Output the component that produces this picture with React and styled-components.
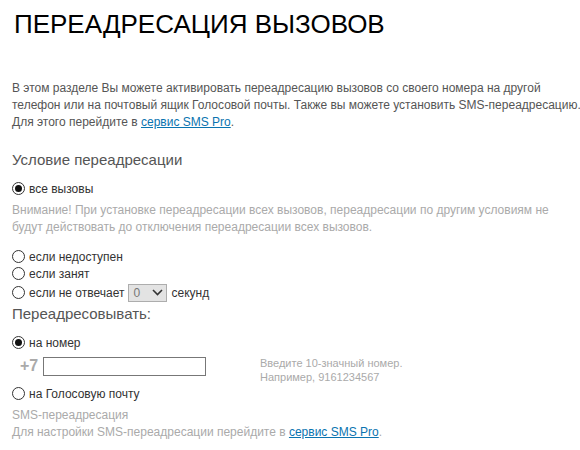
import React from "react";
import styled, { createGlobalStyle } from "styled-components";

const Global = createGlobalStyle`
  html, body { margin: 0; padding: 0; background: #fff; }
  body { font-family: "Liberation Sans", Arial, sans-serif; }
`;

const Page = styled.div`
  padding: 10px 2px 0 12px;
  width: 580px;
  box-sizing: border-box;
`;

const Title = styled.h1`
  margin: 0 0 0 2px;
  font-weight: normal;
  font-size: 26px;
  line-height: 29px;
  color: #000;
`;

const Intro = styled.p`
  margin: 41px 0 0 0;
  font-size: 12px;
  line-height: 17px;
  color: #555;
  white-space: nowrap;
`;

const Link = styled.a`
  color: #0a74b0;
  text-decoration: underline;
`;

const Heading = styled.h2`
  margin: ${(p) => p.$top}px 0 0 0;
  font-weight: normal;
  font-size: 15px;
  line-height: 20px;
  color: #555;
`;

const RadioRow = styled.label`
  display: flex;
  align-items: center;
  gap: 4px;
  height: ${(p) => p.$h || 17}px;
  margin-top: ${(p) => p.$top || 0}px;
  font-size: 12px;
  color: #333;
`;

const Circle = styled.span`
  width: 11px;
  height: 11px;
  border: 1px solid #333;
  border-radius: 50%;
  background: #fff;
  display: flex;
  align-items: center;
  justify-content: center;
  flex: none;
  &::after {
    content: "";
    display: ${(p) => (p.$on ? "block" : "none")};
    width: 7px;
    height: 7px;
    border-radius: 50%;
    background: #111;
  }
`;

const Note = styled.p`
  margin: ${(p) => p.$top || 0}px 0 0 0;
  font-size: 12px;
  line-height: 17px;
  color: #aaa;
`;

const Select = styled.span`
  display: inline-flex;
  align-items: center;
  justify-content: space-between;
  box-sizing: border-box;
  width: 39px;
  height: 18px;
  padding: 0 3px 0 4px;
  background: #e3e3e3;
  border: 1px solid #adadad;
  color: #777;
  font-size: 12px;
`;

const PhoneRow = styled.div`
  display: flex;
  align-items: flex-start;
  margin-top: 5px;
  height: 29px;
`;

const Prefix = styled.span`
  width: 31px;
  padding-left: 8px;
  box-sizing: border-box;
  font-size: 16px;
  font-weight: bold;
  color: #aaa;
  line-height: 18px;
  margin-top: 1px;
`;

const Input = styled.input`
  box-sizing: border-box;
  width: 163px;
  height: 19px;
  border: 1px solid #777;
  margin: 1px 0 0 0;
  padding: 0 3px;
  background: #fff;
`;

const Hint = styled.div`
  margin-left: 54px;
  margin-top: 1px;
  font-size: 11px;
  line-height: 13.5px;
  color: #aaa;
`;

function Radio({ on, children, h, top }) {
  return (
    <RadioRow $h={h} $top={top}>
      <Circle $on={on} />
      {children}
    </RadioRow>
  );
}

export default function App() {
  return (
    <>
      <Global />
      <Page>
        <Title>ПЕРЕАДРЕСАЦИЯ ВЫЗОВОВ</Title>
        <Intro>
          В этом разделе Вы можете активировать переадресацию вызовов со своего номера на другой
          <br />
          телефон или на почтовый ящик Голосовой почты. Также вы можете установить SMS-переадресацию.
          <br />
          Для этого перейдите в <Link href="#">сервис SMS Pro</Link>.
        </Intro>
        <Heading $top={19}>Условие переадресации</Heading>
        <Radio on top={10}>все вызовы</Radio>
        <Note $top={5}>
          Внимание! При установке переадресации всех вызовов, переадресации по другим условиям не
          будут действовать до отключения переадресации всех вызовов.
        </Note>
        <Radio top={12}>если недоступен</Radio>
        <Radio>если занят</Radio>
        <Radio h={21}>
          если не отвечает
          <Select>
            0
            <svg width="11" height="7" viewBox="0 0 11 7">
              <path d="M1 1 L5.5 5.5 L10 1" fill="none" stroke="#333" strokeWidth="1.6" />
            </svg>
          </Select>
          секунд
        </Radio>
        <Heading $top={1}>Переадресовывать:</Heading>
        <Radio on top={10}>на номер</Radio>
        <PhoneRow>
          <Prefix>+7</Prefix>
          <Input type="text" />
          <Hint>
            Введите 10-значный номер.
            <br />
            Например, 9161234567
          </Hint>
        </PhoneRow>
        <Radio>на Голосовую почту</Radio>
        <Note $top={5}>SMS-переадресация</Note>
        <Note>
          Для настройки SMS-переадресации перейдите в <Link href="#">сервис SMS Pro</Link>.
        </Note>
      </Page>
    </>
  );
}
